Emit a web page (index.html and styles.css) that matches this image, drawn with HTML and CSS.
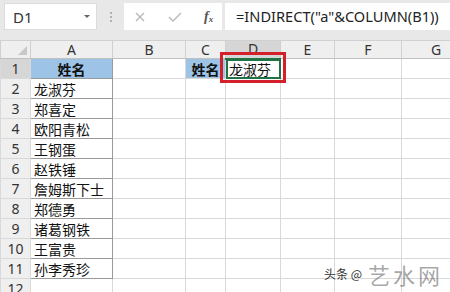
FILE: index.html
```html
<!DOCTYPE html>
<html>
<head>
<meta charset="utf-8">
<link rel="stylesheet" href="styles.css">
</head>
<body>
<div class="app">
  <div class="toolbar">
    <div class="namebox"><span class="ref">D1</span><span class="caret"></span></div>
    <div class="dots"><i></i><i></i><i></i></div>
    <div class="icons">
      <svg class="ic" width="14" height="14" viewBox="0 0 14 14"><path d="M3 3L11 11M11 3L3 11" stroke="#b8b8b8" stroke-width="1.4" fill="none"/></svg>
      <svg class="ic" width="16" height="14" viewBox="0 0 16 14"><path d="M2 7L6 11L14 3" stroke="#b8b8b8" stroke-width="1.4" fill="none"/></svg>
      <span class="fx">f<sub>x</sub></span>
    </div>
    <div class="formula">=INDIRECT("a"&amp;COLUMN(B1))</div>
  </div>
  <div class="sheet">
    <table class="grid">
      <colgroup>
        <col class="c-h"><col class="c-a"><col class="c-b"><col class="c-c"><col class="c-d"><col class="c-e"><col class="c-f"><col class="c-g">
      </colgroup>
      <tr class="hdr">
        <th class="corner"><span class="tri"></span></th><th>A</th><th>B</th><th>C</th><th class="sel">D</th><th>E</th><th>F</th><th>G</th>
      </tr>
      <tr><th class="rh selrow">1</th><td class="ta blue bold center">姓名</td><td></td><td class="blue bold center">姓名</td><td class="active">龙淑芬</td><td></td><td></td><td></td></tr>
      <tr><th class="rh">2</th><td class="ta">龙淑芬</td><td></td><td></td><td></td><td></td><td></td><td></td></tr>
      <tr><th class="rh">3</th><td class="ta">郑喜定</td><td></td><td></td><td></td><td></td><td></td><td></td></tr>
      <tr><th class="rh">4</th><td class="ta">欧阳青松</td><td></td><td></td><td></td><td></td><td></td><td></td></tr>
      <tr><th class="rh">5</th><td class="ta">王钢蛋</td><td></td><td></td><td></td><td></td><td></td><td></td></tr>
      <tr><th class="rh">6</th><td class="ta">赵铁锤</td><td></td><td></td><td></td><td></td><td></td><td></td></tr>
      <tr><th class="rh">7</th><td class="ta">詹姆斯下士</td><td></td><td></td><td></td><td></td><td></td><td></td></tr>
      <tr><th class="rh">8</th><td class="ta">郑德勇</td><td></td><td></td><td></td><td></td><td></td><td></td></tr>
      <tr><th class="rh">9</th><td class="ta">诸葛钢铁</td><td></td><td></td><td></td><td></td><td></td><td></td></tr>
      <tr><th class="rh">10</th><td class="ta">王富贵</td><td></td><td></td><td></td><td></td><td></td><td></td></tr>
      <tr><th class="rh">11</th><td class="ta">孙李秀珍</td><td></td><td></td><td></td><td></td><td></td><td></td></tr>
      <tr><th class="rh">12</th><td></td><td></td><td></td><td></td><td></td><td></td><td></td></tr>
    </table>
    <div class="redbox"></div>
    <div class="mark"><span class="small">头条 @</span><span class="big">艺水网</span></div>
  </div>
</div>
</body>
</html>
```
FILE: styles.css
```css
html, body {
  margin: 0;
  padding: 0;
}
body {
  width: 450px;
  height: 292px;
  overflow: hidden;
  background: #ffffff;
  font-family: "Noto Sans", "Noto Sans CJK SC", sans-serif;
}
.app {
  width: 450px;
  height: 292px;
  overflow: hidden;
}
.toolbar {
  height: 40px;
  background: #e8e8e8;
  display: flex;
  align-items: flex-start;
  padding-top: 3px;
  box-sizing: border-box;
}
.namebox {
  margin-left: 4px;
  width: 93px;
  height: 27px;
  background: #ffffff;
  border: 1px solid #dcdcdc;
  display: flex;
  align-items: center;
  justify-content: space-between;
  box-sizing: border-box;
  padding: 0 6px 0 8px;
}
.ref {
  font-size: 15px;
  color: #333;
}
.caret {
  width: 0;
  height: 0;
  border-left: 3px solid transparent;
  border-right: 3px solid transparent;
  border-top: 3px solid #666;
}
.dots {
  width: 27px;
  height: 27px;
  display: flex;
  flex-direction: column;
  align-items: center;
  justify-content: center;
  gap: 2px;
}
.dots i {
  width: 2px;
  height: 2px;
  background: #b0b0b0;
}
.icons {
  width: 98px;
  height: 27px;
  background: #ffffff;
  display: flex;
  align-items: center;
  padding-left: 9px;
  box-sizing: border-box;
  gap: 20px;
}
.fx {
  font-family: "Liberation Serif", serif;
  font-style: italic;
  font-weight: bold;
  font-size: 14px;
  color: #555;
  margin-left: 1px;
}
.fx sub {
  font-size: 9px;
  vertical-align: -1px;
}
.formula {
  margin-left: 3px;
  flex: 1;
  height: 27px;
  background: #ffffff;
  font-size: 14.6px;
  color: #222;
  line-height: 27px;
  padding-left: 11px;
  white-space: nowrap;
  overflow: hidden;
}
.sheet {
  position: relative;
}
.grid {
  border-collapse: collapse;
  table-layout: fixed;
  width: 470px;
}
.c-h { width: 30px; }
.c-a { width: 82px; }
.c-b { width: 73px; }
.c-c { width: 40px; }
.c-d { width: 55px; }
.c-e { width: 54px; }
.c-f { width: 67px; }
.c-g { width: 69px; }
.grid th, .grid td {
  padding: 0;
  height: 20px;
  box-sizing: border-box;
  border: 1px solid #d9d9d9;
  overflow: hidden;
  white-space: nowrap;
}
.hdr th {
  height: 18px;
  background: #efefef;
  font-weight: normal;
  font-size: 14px;
  color: #333;
  border-color: #d0d0d0;
  border-bottom-color: #c0c0c0;
  line-height: 16px;
  text-align: center;
}
.hdr th.sel {
  background: #d6d6d6;
  border-bottom: 2px solid #217346;
}
.corner {
  position: relative;
}
.tri {
  position: absolute;
  right: 3px;
  bottom: 3px;
  width: 0;
  height: 0;
  border-left: 9px solid transparent;
  border-bottom: 9px solid #c8c8c8;
}
.rh {
  background: #efefef;
  font-weight: normal;
  font-size: 14px;
  color: #333;
  text-align: center;
  border-color: #d0d0d0;
  border-right-color: #c0c0c0;
}
.rh.selrow {
  background: #d6d6d6;
}
.grid td {
  font-family: "Noto Sans CJK SC", sans-serif;
  font-size: 14px;
  color: #111;
  line-height: 18px;
  padding-left: 3px;
}
.grid td.ta {
  border: 1px solid #9a9a9a;
}
.grid td.blue {
  background: #9dc3e6;
}
.grid td.bold {
  font-weight: bold;
}
.grid td.center {
  text-align: center;
  padding-left: 0;
}
.grid td.active {
  outline: 2px solid #217346;
  outline-offset: -2px;
}
.redbox {
  position: absolute;
  left: 220px;
  top: 12px;
  width: 66px;
  height: 31px;
  box-sizing: border-box;
  border: 3px solid #d4202a;
}
.mark {
  position: absolute;
  left: 324px;
  top: 223px;
  display: flex;
  align-items: center;
  white-space: nowrap;
  line-height: 1;
}
.mark .small {
  font-family: "Noto Sans CJK SC", sans-serif;
  font-size: 12px;
  color: #333;
}
.mark .big {
  font-family: "Noto Sans CJK SC", sans-serif;
  font-size: 22px;
  letter-spacing: 3px;
  color: rgba(90, 90, 90, 0.55);
  margin-left: 6px;
}
```
